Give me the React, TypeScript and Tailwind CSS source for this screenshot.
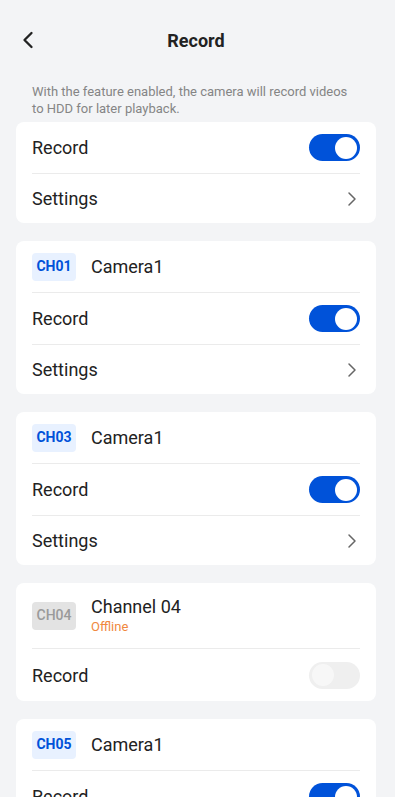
import { ChevronLeft, ChevronRight } from 'lucide-react'

type Channel = {
  id: string
  name: string
  online: boolean
  record: boolean
}

const channels: Channel[] = [
  { id: 'CH01', name: 'Camera1', online: true, record: true },
  { id: 'CH03', name: 'Camera1', online: true, record: true },
  { id: 'CH04', name: 'Channel 04', online: false, record: false },
  { id: 'CH05', name: 'Camera1', online: true, record: true },
]

function Toggle({ on }: { on: boolean }) {
  return (
    <div
      className={`w-[51px] h-[27px] rounded-full flex items-center px-[3px] ${
        on ? 'bg-[#0052d9] justify-end' : 'bg-[#efefef] justify-start'
      }`}
    >
      <div className={`w-[22px] h-[22px] rounded-full ${on ? 'bg-white' : 'bg-[#f7f7f7]'}`} />
    </div>
  )
}

function RecordRow({ on, last }: { on: boolean; last?: boolean }) {
  return (
    <div className={`h-[52px] flex items-center justify-between ${last ? '' : 'border-b border-[#ebebeb]'}`}>
      <span className="text-[18px] text-[#222]">Record</span>
      <Toggle on={on} />
    </div>
  )
}

function SettingsRow() {
  return (
    <div className="h-[49px] flex items-center justify-between">
      <span className="text-[18px] text-[#222]">Settings</span>
      <ChevronRight size={24} strokeWidth={1.5} className="text-[#666] -mr-[4px]" />
    </div>
  )
}

export default function App() {
  return (
    <div
      className="min-h-dvh bg-[#f3f4f6] pb-6"
      style={{ fontFamily: 'Roboto, "Noto Sans", sans-serif' }}
    >
      {/* header */}
      <div className="h-[80px] relative flex items-center justify-center">
        <ChevronLeft size={28} strokeWidth={2} className="absolute left-[14px] text-[#222]" />
        <h1 className="text-[18px] font-bold text-[#222] -ml-[3px]">Record</h1>
      </div>

      <p className="pl-8 pr-[40px] text-[13px] leading-[17px] text-[#858585] pt-[3px] mb-[5px]">
        With the feature enabled, the camera will record videos to HDD for later playback.
      </p>

      <div className="pl-4 pr-[19px] flex flex-col gap-[18px]">
        <div className="bg-white rounded-lg px-4">
          <RecordRow on />
          <SettingsRow />
        </div>

        {channels.map(ch => (
          <div key={ch.id} className="bg-white rounded-lg px-4">
            <div
              className={`flex items-center gap-[15px] border-b border-[#ebebeb] ${
                ch.online ? 'h-[52px]' : 'h-[66px]'
              }`}
            >
              <span
                className={`w-[44px] h-[28px] rounded-[4px] flex items-center justify-center text-[14px] ${
                  ch.online ? 'bg-[#e8f1ff] text-[#0052d9] font-bold' : 'bg-[#e3e3e3] text-[#9a9a9a] font-medium'
                }`}
              >
                {ch.id}
              </span>
              <div className="flex flex-col">
                <span className="text-[18px] text-[#222] leading-[22px]">{ch.name}</span>
                {!ch.online && <span className="text-[13px] text-[#f0883e] leading-[18px]">Offline</span>}
              </div>
            </div>
            <RecordRow on={ch.record} last={!ch.online} />
            {ch.online && <SettingsRow />}
          </div>
        ))}
      </div>
    </div>
  )
}
